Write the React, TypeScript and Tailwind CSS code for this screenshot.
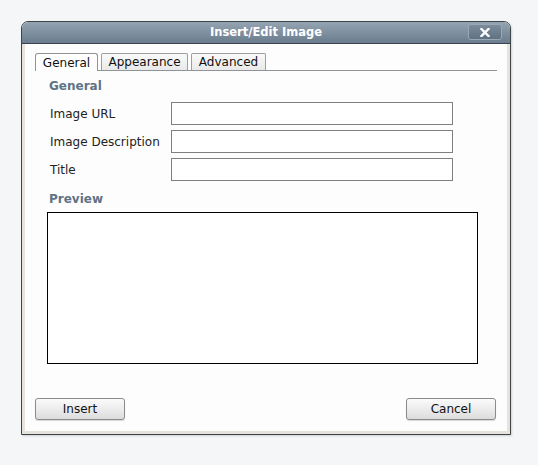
import React from "react";

const font = { fontFamily: '"DejaVu Sans", "Liberation Sans", sans-serif' };

function Field({ label }: { label: string }) {
  return (
    <div className="flex items-center h-[23px]">
      <span className="w-[121px] text-[12px] text-[#222]">{label}</span>
      <div className="w-[282px] h-[23px] border border-[#808080] bg-white" />
    </div>
  );
}

export default function App() {
  return (
    <div
      className="w-[538px] h-[465px] bg-[#f5f6f8] pt-[21px] pl-[21px]"
      style={font}
    >
      <div className="w-[490px] h-[414px] flex flex-col rounded-t-[7px] border border-[#3f4448] bg-white shadow-[1px_1px_2px_rgba(0,0,0,0.15)]">
        {/* Title bar */}
        <div className="relative h-[22px] rounded-t-[6px] bg-gradient-to-b from-[#95a4b2] to-[#6a7c8d] border-b border-[#39434d] flex items-center justify-center">
          <span className="text-[11.5px] font-bold text-white">
            Insert/Edit Image
          </span>
          <div className="absolute right-[8px] top-[2px] w-[34px] h-[16px] rounded-[3px] border border-[#9aa8b5] bg-gradient-to-b from-[#7c8c9b] to-[#5f7182] flex items-center justify-center">
            <svg width="10" height="9" viewBox="0 0 10 9">
              <path
                d="M1.5 1 L8.5 8 M8.5 1 L1.5 8"
                stroke="white"
                strokeWidth="2.4"
                strokeLinecap="square"
              />
            </svg>
          </div>
        </div>

        {/* Body */}
        <div className="flex-1 flex flex-col border-l-[3px] border-r-[3px] border-b-[3px] border-[#e6e3dc] bg-[#fdfdfd] pl-[10px] pr-[10px]">
          {/* Tabs */}
          <div className="mt-[10px] flex items-end gap-[3px] border-b border-[#8e9498] h-[17px]">
            <div className="h-[18px] -mb-px w-[63px] border border-b-0 border-[#8e9498] rounded-t-[3px] bg-white flex items-center justify-center text-[12px] text-[#111]">
              General
            </div>
            <div className="h-[17px] w-[87px] border border-b-0 border-[#9aa0a4] rounded-t-[2px] bg-gradient-to-b from-[#fafafa] to-[#e9e9e9] flex items-center justify-center text-[12px] text-[#111]">
              Appearance
            </div>
            <div className="h-[17px] w-[75px] border border-b-0 border-[#9aa0a4] rounded-t-[2px] bg-gradient-to-b from-[#fafafa] to-[#e9e9e9] flex items-center justify-center text-[12px] text-[#111]">
              Advanced
            </div>
          </div>

          <div className="pl-[14px] pr-[16px]">
            <div className="mt-[6px] text-[12px] font-bold text-[#5e7386]">
              General
            </div>
            <div className="mt-[7px] pl-[1px] flex flex-col gap-[5px]">
              <Field label="Image URL" />
              <Field label="Image Description" />
              <Field label="Title" />
            </div>
            <div className="mt-[9px] text-[12px] font-bold text-[#5e7386]">
              Preview
            </div>
            <div className="mt-[4px] -ml-[2px] w-[431px] h-[152px] border border-black bg-white" />
          </div>

          <div className="mt-auto mb-[11px] flex justify-between pr-[1px]">
            <button className="w-[90px] h-[22px] rounded-[3px] border border-[#8a8a8a] bg-gradient-to-b from-[#fbfbfb] via-[#ececec] to-[#dcdcdc] text-[12px] text-[#111] shadow-[0_1px_1px_rgba(0,0,0,0.15)]">
              Insert
            </button>
            <button className="w-[90px] h-[22px] rounded-[3px] border border-[#8a8a8a] bg-gradient-to-b from-[#fbfbfb] via-[#ececec] to-[#dcdcdc] text-[12px] text-[#111] shadow-[0_1px_1px_rgba(0,0,0,0.15)]">
              Cancel
            </button>
          </div>
        </div>
      </div>
    </div>
  );
}
